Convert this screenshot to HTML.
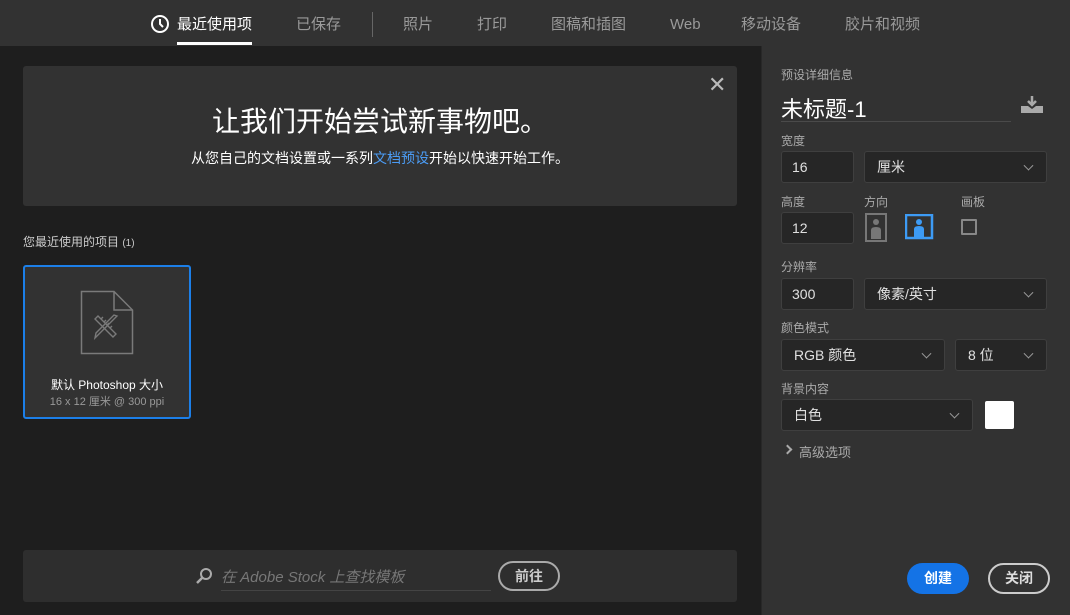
<!DOCTYPE html>
<html><head><meta charset="utf-8"><style>
*{box-sizing:border-box;margin:0;padding:0}
body{width:1070px;height:615px;background:#1e1e1e;font-family:"Liberation Sans","Noto Sans CJK SC",sans-serif;color:#ddd;position:relative;overflow:hidden}
.a{position:absolute}
.top{left:0;top:0;width:1070px;height:46px;background:#323232}
.tab{top:14px;font-size:15px;line-height:22px;height:22px;color:#9a9a9a}
.rp{left:761px;top:46px;width:309px;height:569px;background:#323232;border-left:1px solid #282828}
.lbl{font-size:12px;color:#aaa}
.inp{background:#262626;border:1px solid #3f3f3f;border-radius:3px;font-size:14px;color:#e0e0e0;padding-left:10px;display:flex;align-items:center}
.chev{position:absolute;right:14px;top:50%;width:7px;height:7px;border-right:1.5px solid #999;border-bottom:1.5px solid #999;transform:translateY(-70%) rotate(45deg)}
</style></head><body>
<div class="a top"></div>
<svg class="a" style="left:150px;top:14px" width="20" height="20" viewBox="0 0 20 20"><circle cx="10" cy="10" r="8" fill="none" stroke="#fff" stroke-width="2"/><path d="M10 5v5l3 3" fill="none" stroke="#fff" stroke-width="2"/></svg>
<div class="a tab" style="left:177px;color:#fff">最近使用项</div>
<div class="a" style="left:177px;top:42px;width:75px;height:3px;background:#fff"></div>
<div class="a tab" style="left:296px">已保存</div>
<div class="a" style="left:372px;top:12px;width:1px;height:25px;background:#666"></div>
<div class="a tab" style="left:403px">照片</div>
<div class="a tab" style="left:477px">打印</div>
<div class="a tab" style="left:551px">图稿和插图</div>
<div class="a tab" style="left:670px">Web</div>
<div class="a tab" style="left:741px">移动设备</div>
<div class="a tab" style="left:845px">胶片和视频</div>

<div class="a" style="left:23px;top:66px;width:714px;height:140px;background:#323232;border-radius:3px"></div>
<div class="a" style="left:708px;top:72px;font-size:22px;color:#bbb">✕</div>
<div class="a" style="left:0;width:760px;top:100px;text-align:center;font-size:28px;color:#fff">让我们开始尝试新事物吧。</div>
<div class="a" style="left:0;width:760px;top:148px;text-align:center;font-size:14px;color:#fff">从您自己的文档设置或一系列<span style="color:#4b9cf5">文档预设</span>开始以快速开始工作。</div>
<div class="a" style="left:23px;top:233px;font-size:12px;color:#ccc">您最近使用的项目 <span style="font-size:10px">(1)</span></div>

<div class="a" style="left:23px;top:265px;width:168px;height:154px;background:#323232;border:2px solid #1c7fe8;border-radius:3px"></div>
<svg class="a" style="left:80px;top:290px" width="55" height="65" viewBox="0 0 55 65"><path d="M1.5 1.5H34L52.5 20V63.5H1.5Z M34 1.5V20H52.5" fill="none" stroke="#7a7a7a" stroke-width="1.5"/><path d="M18 26l18 18l-3 3l-18-18z M21 29l2-2M24 32l2-2M27 35l2-2M30 38l2-2" fill="none" stroke="#7a7a7a" stroke-width="1.4"/><path d="M37 26l-18 18l-4 4l1-5l18-18z" fill="none" stroke="#7a7a7a" stroke-width="1.4"/></svg>
<div class="a" style="left:25px;width:164px;top:376px;text-align:center;font-size:12px;color:#fff">默认 Photoshop 大小</div>
<div class="a" style="left:25px;width:164px;top:393px;text-align:center;font-size:11px;color:#999">16 x 12 厘米 @ 300 ppi</div>

<div class="a" style="left:23px;top:550px;width:714px;height:52px;background:#2e2e2e;border-radius:3px"></div>
<svg class="a" style="left:195px;top:567px" width="18" height="18" viewBox="0 0 18 18"><circle cx="11" cy="7" r="5" fill="none" stroke="#aaa" stroke-width="2"/><path d="M7 11l-5 5" stroke="#aaa" stroke-width="2.5"/></svg>
<div class="a" style="left:221px;top:566px;font-size:15px;color:#777;font-style:italic">在 Adobe Stock 上查找模板</div>
<div class="a" style="left:221px;top:590px;width:270px;height:1px;background:#444"></div>
<div class="a" style="left:498px;top:561px;width:62px;height:30px;border:2px solid #aaa;border-radius:15px;text-align:center;line-height:26px;font-size:14px;color:#ccc;font-weight:bold">前往</div>

<div class="a rp"></div>
<div class="a lbl" style="left:781px;top:66px">预设详细信息</div>
<div class="a" style="left:781px;top:92px;font-size:22px;color:#fff">未标题-1</div>
<div class="a" style="left:781px;top:121px;width:230px;height:1px;background:#4a4a4a"></div>
<svg class="a" style="left:1020px;top:96px" width="24" height="18" viewBox="0 0 24 18"><path d="M12 0v9M8 5l4 4 4-4" stroke="#aaa" stroke-width="2.5" fill="none"/><path d="M1 10h7l4 3 4-3h7v7H1z" fill="#aaa"/></svg>
<div class="a lbl" style="left:781px;top:132px">宽度</div>
<div class="a inp" style="left:781px;top:151px;width:73px;height:32px">16</div>
<div class="a inp" style="left:864px;top:151px;width:183px;height:32px;padding-left:12px">厘米<span class="chev"></span></div>
<div class="a lbl" style="left:781px;top:193px">高度</div>
<div class="a lbl" style="left:864px;top:193px">方向</div>
<div class="a lbl" style="left:961px;top:193px">画板</div>
<div class="a inp" style="left:781px;top:212px;width:73px;height:32px">12</div>
<svg class="a" style="left:865px;top:213px" width="24" height="30" viewBox="0 0 24 30"><rect x="1" y="1" width="20" height="27" fill="none" stroke="#777" stroke-width="2"/><circle cx="11" cy="9" r="3" fill="#777"/><path d="M6 26v-9q0-3 5-3t5 3v9z" fill="#777"/></svg>
<svg class="a" style="left:905px;top:214px" width="30" height="26" viewBox="0 0 30 26"><rect x="1" y="1" width="26" height="23" fill="none" stroke="#3d9bf5" stroke-width="2.5"/><circle cx="14" cy="8" r="3" fill="#3d9bf5"/><path d="M9 23v-8q0-3 5-3t5 3v8z" fill="#3d9bf5"/></svg>
<div class="a" style="left:961px;top:219px;width:16px;height:16px;border:2px solid #888;border-radius:1px"></div>
<div class="a lbl" style="left:781px;top:258px">分辨率</div>
<div class="a inp" style="left:781px;top:278px;width:73px;height:32px">300</div>
<div class="a inp" style="left:864px;top:278px;width:183px;height:32px;padding-left:12px">像素/英寸<span class="chev"></span></div>
<div class="a lbl" style="left:781px;top:319px">颜色模式</div>
<div class="a inp" style="left:781px;top:339px;width:164px;height:32px;padding-left:12px">RGB 颜色<span class="chev"></span></div>
<div class="a inp" style="left:955px;top:339px;width:92px;height:32px;padding-left:12px">8 位<span class="chev"></span></div>
<div class="a lbl" style="left:781px;top:380px">背景内容</div>
<div class="a inp" style="left:781px;top:399px;width:192px;height:32px;padding-left:12px">白色<span class="chev"></span></div>
<div class="a" style="left:985px;top:401px;width:29px;height:28px;background:#fff;border-radius:2px"></div>
<div class="a" style="left:784px;top:446px;width:7px;height:7px;border-right:2px solid #aaa;border-top:2px solid #aaa;transform:rotate(45deg)"></div>
<div class="a" style="left:799px;top:442px;font-size:13px;color:#aaa">高级选项</div>
<div class="a" style="left:907px;top:563px;width:62px;height:31px;background:#1473e6;border-radius:16px;text-align:center;line-height:31px;font-size:14px;font-weight:bold;color:#fff">创建</div>
<div class="a" style="left:988px;top:563px;width:62px;height:31px;border:2px solid #ccc;border-radius:16px;text-align:center;line-height:27px;font-size:14px;font-weight:bold;color:#ddd">关闭</div>
</body></html>
